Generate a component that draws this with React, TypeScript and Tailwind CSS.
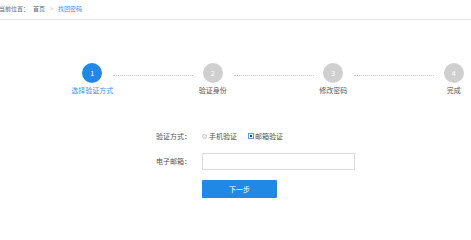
import React from "react";

const steps = ["选择验证方式", "验证身份", "修改密码", "完成"];

export default function App() {
  return (
    <div
      className="w-[471px] h-[204px] overflow-hidden bg-white text-[7px] leading-[9px] text-[#666]"
      style={{ fontFamily: '"Noto Sans CJK SC", "Noto Sans", sans-serif' }}
    >
      <div className="h-[20px] border-b border-[#e8e8e8] flex items-center ml-[-1px] pb-[3px] text-[6px]">
        <span>当前位置：</span>
        <span className="ml-[4px]">首页</span>
        <span className="ml-[5px] text-[#bbb]">&gt;</span>
        <span className="ml-[4.5px] text-[#3d8fe6]">找回密码</span>
      </div>

      <div className="mt-[43px] ml-[32px] flex w-[482px]">
        {steps.map((s, i) => (
          <div key={s} className="relative w-[120.5px] shrink-0 flex flex-col items-center">
            <div
              className={
                "w-[20px] h-[20px] rounded-full flex items-center justify-center text-white text-[7px] " +
                (i === 0 ? "bg-[#2188e6]" : "bg-[#cfcfcf]")
              }
            >
              {i + 1}
            </div>
            <div className={"mt-[3px] " + (i === 0 ? "text-[#3d8fe6]" : "text-[#555]")}>{s}</div>
            {i < 3 && (
              <div className="absolute top-[12px] left-[81px] w-[80px] border-t border-dotted border-[#c8c8c8]" />
            )}
          </div>
        ))}
      </div>

      <div className="ml-[156px] mt-[35px] flex flex-col">
        <div className="flex items-center h-[12px]">
          <div className="w-[46px] text-[#555]">验证方式：</div>
          <div className="flex items-center">
            <span className="w-[5px] h-[5px] rounded-full border border-[#c8c8c8] bg-[#eee]" />
            <span className="ml-[2px] text-[#555]">手机验证</span>
            <span className="ml-[11px] w-[6px] h-[6px] border border-[#5b9be6] bg-[#eef4fc] flex items-center justify-center">
              <span className="w-[2px] h-[2px] bg-[#444]" />
            </span>
            <span className="ml-[1px] text-[#555]">邮箱验证</span>
          </div>
        </div>
        <div className="flex items-center mt-[11px]">
          <div className="w-[46px] text-[#555]">电子邮箱：</div>
          <div className="w-[153px] h-[17px] border border-[#dcdcdc] bg-white" />
        </div>
        <div className="mt-[10px] ml-[46px]">
          <div className="w-[75px] h-[18px] bg-[#2188e6] text-white flex items-center justify-center rounded-[1px]">
            下一步
          </div>
        </div>
      </div>
    </div>
  );
}
